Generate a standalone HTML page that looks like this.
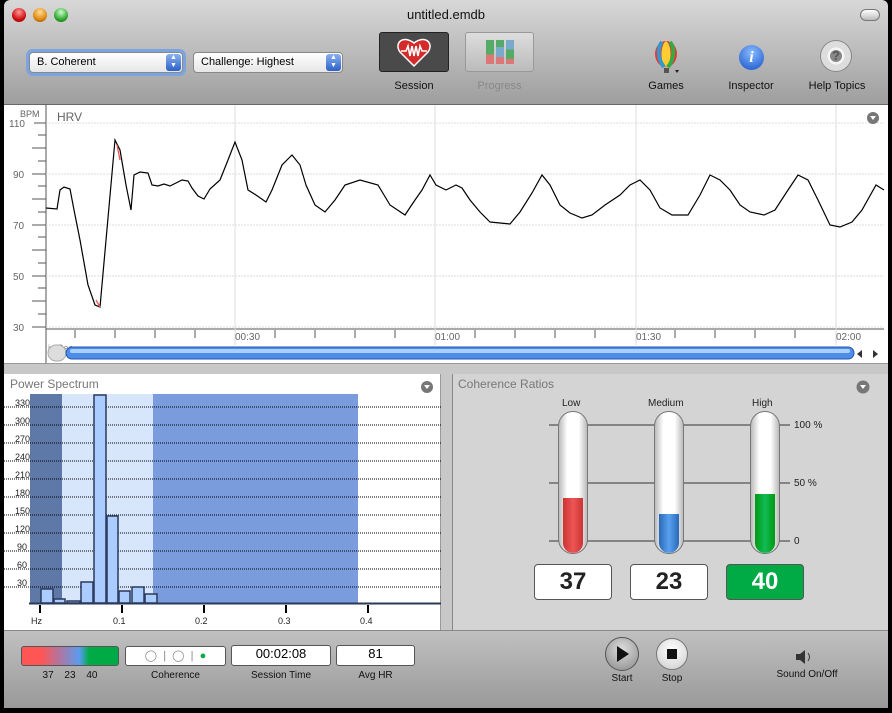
<!DOCTYPE html>
<html><head><meta charset="utf-8"><style>
*{margin:0;padding:0;box-sizing:border-box}
body{width:892px;height:713px;background:#000;position:relative;overflow:hidden;font-family:"Liberation Sans",sans-serif}
.a{position:absolute}
.win{left:4px;top:0;width:884px;height:708px;background:linear-gradient(#d8d8d8,#9e9e9e 104px);border-radius:6px 6px 0 0}
.lbl{font-size:11px;color:#111;text-align:center}
.pop{height:21px;border-radius:4px;background:linear-gradient(#fff,#e6e6e6);border:1px solid #888;font-size:11px;padding:3px 7px}
.pop b{position:absolute;right:1px;top:1px;width:15px;height:17px;border-radius:3px;background:linear-gradient(#8ab2ee,#2c62c8);color:#fff;font-size:7px;line-height:8px;text-align:center;font-weight:normal}
.box{background:#fff;border:1px solid #555;border-radius:3px;font-size:13px;text-align:center}
.tube{width:30px;height:143px;border-radius:15px;background:linear-gradient(90deg,#bbb,#fff 30%,#fff 70%,#bbb);border:1px solid #777;overflow:hidden}
.tube i{position:absolute;left:4px;right:4px;bottom:0;border-radius:0 0 11px 11px}
.num{width:78px;height:36px;border:1px solid #555;border-radius:4px;background:#fff;font:bold 24px "Liberation Sans",sans-serif;text-align:center;line-height:34px;color:#222}
</style></head><body>
<div class="a win"></div>
<div class="a" style="left:12px;top:8px;width:14px;height:14px;border-radius:7px;background:radial-gradient(circle at 50% 30%,#f99,#d01010 60%,#800)"></div>
<div class="a" style="left:33px;top:8px;width:14px;height:14px;border-radius:7px;background:radial-gradient(circle at 50% 30%,#fd9,#e08a10 60%,#840)"></div>
<div class="a" style="left:54px;top:8px;width:14px;height:14px;border-radius:7px;background:radial-gradient(circle at 50% 30%,#cfc,#3a3 60%,#060)"></div>
<div class="a" style="left:860px;top:9px;width:20px;height:12px;border-radius:6px;border:1px solid #777;background:linear-gradient(#fff,#bbb)"></div>
<div class="a" style="left:0;width:892px;top:7px;text-align:center;font-size:13px;color:#111">untitled.emdb</div>
<div class="a pop" style="left:29px;top:52px;width:154px;box-shadow:0 0 0 3px #7aa4e0">B. Coherent<b>▲<br>▼</b></div>
<div class="a pop" style="left:193px;top:52px;width:150px">Challenge: Highest<b>▲<br>▼</b></div>
<div class="a" style="left:379px;top:32px;width:70px;height:40px;background:#4a4a4a;border:1px solid #222;border-radius:3px"></div>
<svg class="a" style="left:396px;top:36px" width="36" height="32" viewBox="0 0 36 32"><path d="M18 30 L4 16 C-2 8 6 -2 18 7 C30 -2 38 8 32 16 Z" fill="#d42a2a" stroke="#fff" stroke-width="1.5"/><path d="M5 15 L10 15 L12 10 L14 20 L16 10 L18 20 L20 10 L22 20 L24 10 L26 15 L31 15" stroke="#fff" stroke-width="1.6" fill="none"/></svg>
<div class="a" style="left:465px;top:32px;width:69px;height:40px;background:linear-gradient(#ddd,#bbb);border:1px solid #999;border-radius:3px"></div>
<div class="a" style="left:486px;top:40px;width:8px;height:24px;background:linear-gradient(#5a6 60%,#d77 60%)"></div>
<div class="a" style="left:496px;top:40px;width:8px;height:24px;background:linear-gradient(#5a6 30%,#7ac 30%,#7ac 70%,#d77 70%)"></div>
<div class="a" style="left:506px;top:40px;width:8px;height:24px;background:linear-gradient(#7ac 40%,#5a6 40%,#5a6 80%,#d77 80%)"></div>
<div class="a lbl" style="left:379px;top:80px;width:70px">Session</div>
<div class="a lbl" style="left:465px;top:80px;width:69px;color:#888">Progress</div>
<svg class="a" style="left:652px;top:40px" width="30" height="36"><ellipse cx="14" cy="14" rx="11" ry="13" fill="#e33"/><path d="M14 1 C8 5 8 23 14 27 C20 23 20 5 14 1Z" fill="#fc3"/><path d="M10 2 C5 8 6 20 12 27" stroke="#39c" stroke-width="4" fill="none"/><path d="M18 2 C23 8 22 20 16 27" stroke="#3a4" stroke-width="4" fill="none"/><rect x="12" y="28" width="5" height="5" fill="#555"/><path d="M23 30 l4 0 l-2 3z" fill="#222"/></svg>
<div class="a" style="left:739px;top:45px;width:25px;height:25px;border-radius:13px;background:radial-gradient(circle at 50% 30%,#8bf,#1550c8);color:#fff;font:italic bold 16px 'Liberation Serif',serif;text-align:center;line-height:25px">i</div>
<div class="a" style="left:821px;top:41px;width:30px;height:30px;border-radius:15px;border:6px solid #ddd;background:#888;box-shadow:inset 0 0 0 3px #f4f4f4,0 0 0 1px #888;color:#555;font:bold 13px sans-serif;text-align:center;line-height:18px">?</div>
<div class="a lbl" style="left:636px;top:80px;width:60px">Games</div>
<div class="a lbl" style="left:716px;top:80px;width:70px">Inspector</div>
<div class="a lbl" style="left:800px;top:80px;width:74px">Help Topics</div>
<div class="a" style="left:4px;top:104px;width:884px;height:260px;background:#fff;border-top:1px solid #666;border-bottom:1px solid #999"></div>
<svg class="a" style="left:4px;top:105px" width="884" height="258">
<g font-family="Liberation Sans" font-size="10" fill="#666">
<text x="16" y="12" font-size="9">BPM</text><text x="5" y="22">110</text><text x="9" y="73">90</text><text x="9" y="124">70</text><text x="9" y="175">50</text><text x="9" y="226">30</text>
<text x="53" y="16" font-size="12">HRV</text>
<text x="231" y="235">00:30</text><text x="431" y="235">01:00</text><text x="632" y="235">01:30</text><text x="832" y="235">02:00</text>
</g>
<g stroke="#555" stroke-width="1">
<path d="M42 0V258M42 224H880"/>
<path d="M30 18H42M34 30H42M28 43H42M34 56H42M28 69H42M34 81H42M28 94H42M34 107H42M28 120H42M34 132H42M28 145H42M34 158H42M28 171H42M34 183H42M28 196H42M34 209H42M28 222H42"/>
<path d="M71 225V233M111 225V233M151 225V233M191 225V233M271 225V233M311 225V233M351 225V233M391 225V233M471 225V233M511 225V233M551 225V233M591 225V233M671 225V233M711 225V233M751 225V233M791 225V233"/>
</g>
<g stroke="#ddd"><path d="M42 18H880M42 69H880M42 120H880M42 171H880M42 222H880" stroke-dasharray="2 1"/><path d="M231 0V240M431 0V240M632 0V240M832 0V240"/></g>
<circle cx="869" cy="13" r="6" fill="#777"/><path d="M866 11h6l-3 4z" fill="#fff"/>
<g transform="translate(-4,-105)"><polyline fill="none" stroke="#000" stroke-width="1.2" points="46,208 57,209 60,190 64,187 70,189 74,210 80,240 88,285 95,305 100,307 115,140 120,150 126,185 131,210 134,175 140,172 148,173 152,185 158,186 164,184 170,186 176,183 182,180 188,181 192,188 198,196 204,199 210,189 220,180 228,160 235,142 242,160 248,190 256,195 266,202 272,190 282,165 292,155 300,165 306,185 315,205 325,212 335,200 345,185 360,180 378,185 390,205 405,215 415,200 422,190 430,175 436,185 446,190 456,185 462,188 470,200 480,212 490,222 510,224 520,212 532,193 542,175 550,185 560,205 570,213 582,218 592,215 605,205 620,195 630,185 640,180 650,190 660,208 672,215 688,215 700,195 710,175 720,180 730,190 740,205 750,212 764,215 775,210 788,190 798,175 808,180 818,200 830,225 840,227 852,222 862,210 876,185 884,190"/>
<path d="M96 300 L100 307 M117 145 L120 160" stroke="#e55" stroke-width="1.3"/></g>
<text x="44" y="246" font-family="Liberation Sans" font-size="9" fill="#888">in:Sec</text>
<rect x="44" y="240" width="18" height="16" rx="8" fill="#ddd" stroke="#aaa"/>
<rect x="62" y="242" width="788" height="12" rx="6" fill="#4d8de8" stroke="#2355b0"/>
<rect x="66" y="244" width="780" height="4" rx="2" fill="#a8d0ff"/>
<path d="M858 245v8l-5-4zM869 245v8l5-4z" fill="#333"/>
</svg>
<div class="a" style="left:4px;top:364px;width:884px;height:10px;background:#c8c8c8"></div>
<div class="a" style="left:4px;top:374px;width:437px;height:256px;background:#fff;border-right:1px solid #999"></div>
<svg class="a" style="left:4px;top:374px" width="437" height="256">
<rect x="26" y="20" width="32" height="209" fill="#5e78a8"/>
<rect x="58" y="20" width="91" height="209" fill="#d8e6fb"/>
<rect x="149" y="20" width="205" height="209" fill="#7a9bdc"/>
<g stroke="#000" stroke-dasharray="1 1"><path d="M0 33H437M0 51H437M0 69H437M0 87H437M0 105H437M0 123H437M0 141H437M0 159H437M0 177H437M0 195H437M0 213H437"/></g>
<g font-family="Liberation Sans" font-size="9" fill="#222"><text x="11" y="32">330</text><text x="11" y="50">300</text><text x="11" y="68">270</text><text x="11" y="86">240</text><text x="11" y="104">210</text><text x="11" y="122">180</text><text x="11" y="140">150</text><text x="11" y="158">120</text><text x="13" y="176">90</text><text x="13" y="194">60</text><text x="13" y="212">30</text>
<text x="27" y="250">Hz</text><text x="109" y="250">0.1</text><text x="191" y="250">0.2</text><text x="274" y="250">0.3</text><text x="356" y="250">0.4</text></g>
<text x="6" y="14" font-family="Liberation Sans" font-size="12" fill="#777">Power Spectrum</text>
<circle cx="423" cy="13" r="6" fill="#777"/><path d="M420 11h6l-3 4z" fill="#fff"/>
<g fill="#aaccff" stroke="#2a3a5a" stroke-width="1.5">
<rect x="37" y="215" width="12" height="14"/><rect x="50" y="225" width="11" height="4"/><rect x="63" y="227" width="13" height="2"/><rect x="77" y="208" width="12" height="21"/><rect x="90" y="21" width="12" height="208"/><rect x="103" y="142" width="11" height="87"/><rect x="115" y="217" width="11" height="12"/><rect x="128" y="213" width="12" height="16"/><rect x="141" y="220" width="12" height="9"/></g>
<path d="M25 229.5H437" stroke="#2a3a5a" stroke-width="2"/>
<path d="M36 231v8M118 231v8M200 231v8M282 231v8M364 231v8" stroke="#000" stroke-width="2"/>
</svg>
<div class="a" style="left:441px;top:374px;width:11px;height:256px;background:#c8c8c8"></div>
<div class="a" style="left:452px;top:374px;width:436px;height:256px;background:#d4d4d4;border-left:1px solid #888"></div>
<div class="a" style="left:458px;top:377px;font-size:12px;color:#777">Coherence Ratios</div>
<svg class="a" style="left:856px;top:380px" width="14" height="14"><circle cx="7" cy="7" r="6.5" fill="#777"/><path d="M4 5h6l-3 4z" fill="#fff"/></svg>
<svg class="a" style="left:540px;top:395px" width="300" height="160"><path d="M9 30H250M9 88H250M9 146H250" stroke="#333"/>
<g font-family="Liberation Sans" font-size="10" fill="#222"><text x="254" y="33">100 %</text><text x="254" y="91">50 %</text><text x="254" y="149">0</text><text x="22" y="11">Low</text><text x="108" y="11">Medium</text><text x="212" y="11">High</text></g></svg>
<div class="a tube" style="left:558px;top:411px"><i style="top:86px;background:linear-gradient(90deg,#c33,#e55,#c33)"></i></div>
<div class="a tube" style="left:654px;top:411px"><i style="top:102px;background:linear-gradient(90deg,#2a6ab8,#59a0ee,#2a6ab8)"></i></div>
<div class="a tube" style="left:750px;top:411px"><i style="top:82px;background:linear-gradient(90deg,#091,#1b5,#091)"></i></div>
<div class="a num" style="left:534px;top:564px">37</div>
<div class="a num" style="left:630px;top:564px">23</div>
<div class="a num" style="left:726px;top:564px;background:#0a4;color:#fff">40</div>
<div class="a" style="left:4px;top:630px;width:884px;height:78px;background:linear-gradient(#c0c0c0,#999);border-top:1px solid #888"></div>
<div class="a" style="left:21px;top:646px;width:98px;height:20px;border:1px solid #555;border-radius:3px;background:linear-gradient(90deg,#f55 20%,#5a9bf0 60%,#0a4 70%)"></div>
<div class="a lbl" style="left:21px;top:670px;width:98px;font-size:10px;word-spacing:8px">37 23 40</div>
<div class="a box" style="left:125px;top:646px;width:101px;height:20px;font-size:11px;color:#888;line-height:18px">◯ &nbsp;|&nbsp; ◯ &nbsp;|&nbsp; <span style="color:#0a4">●</span></div>
<div class="a box" style="left:231px;top:645px;width:100px;height:21px">00:02:08</div>
<div class="a box" style="left:336px;top:645px;width:79px;height:21px">81</div>
<div class="a lbl" style="left:125px;top:670px;width:101px;font-size:10px">Coherence</div>
<div class="a lbl" style="left:231px;top:670px;width:100px;font-size:10px">Session Time</div>
<div class="a lbl" style="left:336px;top:670px;width:79px;font-size:10px">Avg HR</div>
<div class="a" style="left:605px;top:637px;width:34px;height:34px;border-radius:17px;background:radial-gradient(circle at 50% 35%,#ddd,#888);border:1px solid #555"></div>
<svg class="a" style="left:612px;top:644px" width="20" height="20"><path d="M5 2L17 10L5 18Z" fill="#111"/></svg>
<div class="a" style="left:656px;top:638px;width:32px;height:32px;border-radius:16px;background:radial-gradient(circle at 50% 35%,#fff,#ccc);border:1px solid #777"></div>
<div class="a" style="left:667px;top:649px;width:10px;height:10px;background:#111"></div>
<div class="a lbl" style="left:602px;top:673px;width:40px;font-size:10px">Start</div>
<div class="a lbl" style="left:652px;top:673px;width:40px;font-size:10px">Stop</div>
<svg class="a" style="left:795px;top:650px" width="20" height="14"><path d="M1 4h4l5-4v14l-5-4H1z" fill="#333"/><path d="M13 3q3 4 0 8" stroke="#333" fill="none"/></svg>
<div class="a lbl" style="left:767px;top:669px;width:80px;font-size:10px">Sound On/Off</div>
</body></html>
